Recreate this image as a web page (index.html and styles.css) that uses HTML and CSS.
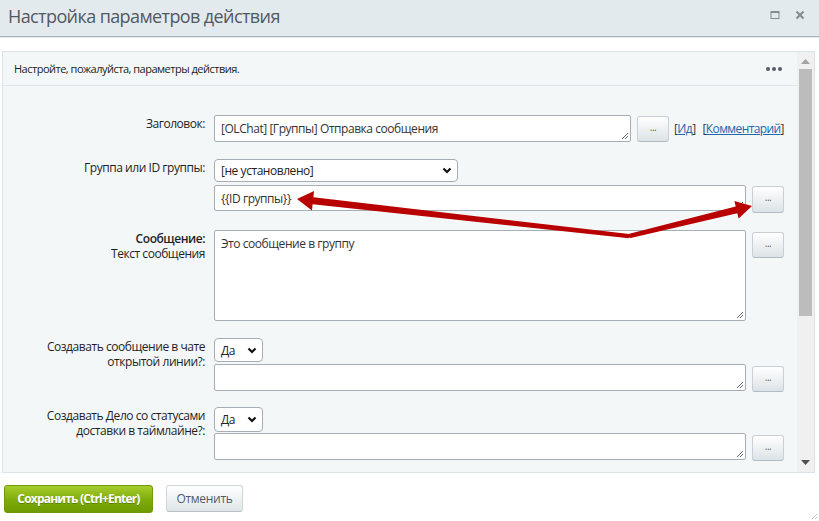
FILE: index.html
```html
<!DOCTYPE html>
<html lang="ru">
<head>
<meta charset="utf-8">
<title>Настройка параметров действия</title>
<link rel="stylesheet" href="styles.css">
</head>
<body>
<div class="titlebar">
  <span class="title">Настройка параметров действия</span>
  <div class="win-icons">
    <svg width="10" height="10" viewBox="0 0 10 10"><rect x="1" y="1.5" width="8" height="7" fill="none" stroke="#7f8a95" stroke-width="1"/><rect x="1" y="1" width="8" height="2" fill="#7f8a95"/></svg>
    <svg width="10" height="10" viewBox="0 0 10 10"><path d="M1.5 1.5 L8.5 8.5 M8.5 1.5 L1.5 8.5" stroke="#7f8a95" stroke-width="2"/></svg>
  </div>
</div>
<div class="content">
  <div class="panel">
    <div class="panel-main">
      <div class="panel-head">
        <span>Настройте, пожалуйста, параметры действия.</span>
        <span class="dots"><i></i><i></i><i></i></span>
      </div>
      <div class="form">
        <div class="row r1">
          <div class="label">Заголовок:</div>
          <div class="field">
            <div class="line">
              <div class="ta ta-title">[OLChat] [Группы] Отправка сообщения<svg class="grip" width="9" height="9" viewBox="0 0 9 9"><path d="M8 2 L2 8 M8 5 L5 8" stroke="#666" stroke-width="1"/></svg></div>
              <div class="btn-dots">...</div>
              <div class="links"><span class="br">[</span><a>Ид</a><span class="br">]</span><span class="br sp">[</span><a>Комментарий</a><span class="br">]</span></div>
            </div>
          </div>
        </div>
        <div class="row r2">
          <div class="label">Группа или ID группы:</div>
          <div class="field">
            <div class="select sel-wide"><span>[не установлено]</span><svg width="10" height="7" viewBox="0 0 10 7"><path d="M1.5 1.5 L5 5 L8.5 1.5" fill="none" stroke="#111" stroke-width="2.2"/></svg></div>
            <div class="line">
              <div class="ta ta-id">{{ID группы}}<svg class="grip" width="9" height="9" viewBox="0 0 9 9"><path d="M8 2 L2 8 M8 5 L5 8" stroke="#666" stroke-width="1"/></svg></div>
              <div class="btn-dots tall">...</div>
            </div>
          </div>
        </div>
        <div class="row r3">
          <div class="label"><span class="strong">Сообщение:</span><br>Текст сообщения</div>
          <div class="field">
            <div class="line">
              <div class="ta ta-big">Это сообщение в группу<svg class="grip" width="9" height="9" viewBox="0 0 9 9"><path d="M8 2 L2 8 M8 5 L5 8" stroke="#666" stroke-width="1"/></svg></div>
              <div class="btn-dots low">...</div>
            </div>
          </div>
        </div>
        <div class="row r4">
          <div class="label">Создавать сообщение в чате<br>открытой линии?:</div>
          <div class="field">
            <div class="select sel-small"><span>Да</span><svg width="10" height="7" viewBox="0 0 10 7"><path d="M1.5 1.5 L5 5 L8.5 1.5" fill="none" stroke="#111" stroke-width="2.2"/></svg></div>
            <div class="line">
              <div class="ta"><svg class="grip" width="9" height="9" viewBox="0 0 9 9"><path d="M8 2 L2 8 M8 5 L5 8" stroke="#666" stroke-width="1"/></svg></div>
              <div class="btn-dots low">...</div>
            </div>
          </div>
        </div>
        <div class="row r5">
          <div class="label">Создавать Дело со статусами<br>доставки в таймлайне?:</div>
          <div class="field">
            <div class="select sel-small s5"><span>Да</span><svg width="10" height="7" viewBox="0 0 10 7"><path d="M1.5 1.5 L5 5 L8.5 1.5" fill="none" stroke="#111" stroke-width="2.2"/></svg></div>
            <div class="line">
              <div class="ta"><svg class="grip" width="9" height="9" viewBox="0 0 9 9"><path d="M8 2 L2 8 M8 5 L5 8" stroke="#666" stroke-width="1"/></svg></div>
              <div class="btn-dots low">...</div>
            </div>
          </div>
        </div>
      </div>
    </div>
    <div class="scrollbar">
      <svg class="sb-arrow" width="9" height="5" viewBox="0 0 9 5"><path d="M0 5 L4.5 0 L9 5 Z" fill="#a3a3a3"/></svg>
      <div class="thumb"></div>
      <div class="sb-fill"></div>
      <svg class="sb-arrow" width="9" height="5" viewBox="0 0 9 5"><path d="M0 0 L4.5 5 L9 0 Z" fill="#505050"/></svg>
    </div>
  </div>
  <div class="footer">
    <div class="btn-save">Сохранить (Ctrl+Enter)</div>
    <div class="btn-cancel">Отменить</div>
  </div>
</div>
<svg class="arrows" width="819" height="521" viewBox="0 0 819 521">
  <polygon fill="#b90000" points="297,199 314,191 313.4,197.3 629.2,234 628.8,238.2 312.6,204.3 312,210.5"/>
  <polygon fill="#b90000" points="752,206 738.6,218.5 737.3,213.2 629.6,238.2 628.4,234 735.7,206.4 734.4,201"/>
</svg>
<svg class="corner-grip" width="8" height="8" viewBox="0 0 8 8"><path d="M7 2 L2 7 M7 5 L5 7" stroke="#c8c8c8" stroke-width="1"/></svg>
</body>
</html>
```
FILE: styles.css
```css
html, body {
  margin: 0;
  padding: 0;
  background: #fff;
  width: 819px;
  height: 521px;
  overflow: hidden;
  font-family: "Open Sans", "Noto Sans", sans-serif;
  color: #222;
  position: relative;
}

.titlebar {
  height: 36px;
  background: #e3eaed;
  border-bottom: 1px solid #adb2b6;
  box-shadow: 0 1px 0 #e6e9eb;
  display: flex;
  align-items: center;
  justify-content: space-between;
  padding: 0 14px 0 8px;
}
.title {
  font-size: 18px;
  color: #525860;
  letter-spacing: -0.6px;
  margin-top: -5px;
}
.win-icons {
  display: flex;
  gap: 15px;
  margin-top: -6px;
}

.content {
  padding: 14px 4px 0 2px;
}

.panel {
  height: 420px;
  width: 811px;
  border: 1px solid #dbe3e7;
  background: #f4f7f8;
  display: flex;
  overflow: hidden;
}
.panel-main {
  width: 794px;
  overflow: hidden;
}
.panel-head {
  height: 33px;
  border-bottom: 1px solid #dde6ea;
  display: flex;
  align-items: center;
  justify-content: space-between;
  padding: 0 15px 0 11px;
  font-size: 11px;
  letter-spacing: -0.5px;
  color: #222;
}
.dots {
  display: flex;
  gap: 2px;
}
.dots i {
  width: 4px;
  height: 4px;
  border-radius: 50%;
  background: #535c69;
}

.form {
  padding-top: 13px;
}
.row {
  display: grid;
  grid-template-columns: 202px 1fr;
  column-gap: 9px;
  margin-top: 17px;
}
.row.r1 {
  margin-top: 16px;
}
.row.r5 {
  margin-top: 15px;
}
.label {
  text-align: right;
  font-size: 12px;
  line-height: 15px;
  padding-top: 1px;
  color: #1f1f1f;
  letter-spacing: -0.45px;
}
.strong {
  font-weight: 600;
}
.field {
  display: flex;
  flex-direction: column;
  gap: 2px;
}
.line {
  display: flex;
  align-items: flex-start;
  gap: 6px;
}
.ta {
  position: relative;
  box-sizing: border-box;
  width: 532px;
  height: 27px;
  border: 1px solid #a5aeb5;
  border-radius: 2px;
  background: #fff;
  font-size: 12px;
  line-height: 15px;
  padding: 5px 6px;
  color: #333;
  letter-spacing: -0.45px;
}
.ta-title {
  width: 417px;
}
.ta-id {
  height: 26px;
}
.ta-big {
  height: 91px;
}
.grip {
  position: absolute;
  right: 1px;
  bottom: 1px;
}
.btn-dots {
  box-sizing: border-box;
  width: 32px;
  height: 26px;
  margin-top: 1px;
  border: 1px solid #c9d0d5;
  border-bottom-color: #b2bbc1;
  border-radius: 3px;
  background: linear-gradient(#ffffff, #dce3e6);
  font-size: 10px;
  line-height: 20px;
  text-align: center;
  color: #555d66;
  letter-spacing: -0.5px;
}
.btn-dots.tall {
  height: 27px;
}
.btn-dots.low {
  margin-top: 2px;
}
.links {
  font-size: 12px;
  line-height: 15px;
  padding-top: 6px;
  margin-left: -1px;
  letter-spacing: -0.6px;
  white-space: nowrap;
}
.links .br {
  color: #333;
}
.links .sp {
  margin-left: 7px;
}
.links a {
  color: #2067b0;
  text-decoration: underline;
}

.select {
  box-sizing: border-box;
  height: 23px;
  border: 1px solid #a5aeb5;
  border-radius: 4px;
  background: #fff;
  display: flex;
  align-items: center;
  justify-content: space-between;
  padding: 0 5px 0 6px;
  font-size: 12px;
  color: #222;
  letter-spacing: -0.45px;
}
.sel-wide {
  width: 244px;
  margin-bottom: 1px;
}
.sel-small {
  width: 49px;
  height: 24px;
}
.sel-small.s5 {
  height: 25px;
  margin-bottom: -1px;
}

.scrollbar {
  width: 17px;
  background: #f0f0f0;
  display: flex;
  flex-direction: column;
  align-items: center;
  padding-top: 7px;
}
.sb-arrow {
  flex: none;
}
.thumb {
  width: 13px;
  height: 247px;
  margin-top: 5px;
  background: #bcbcbc;
}
.sb-fill {
  flex: 1;
}
.scrollbar .sb-arrow:last-child {
  margin-bottom: 7px;
}

.footer {
  display: flex;
  gap: 13px;
  padding: 12px 0 0 2px;
  align-items: flex-start;
}
.btn-save {
  box-sizing: border-box;
  width: 149px;
  height: 28px;
  border-radius: 3px;
  border: 1px solid #6f9a06;
  background: linear-gradient(#a6cd2c, #7eab0c 55%, #6c9a00);
  color: #fff;
  font-size: 12px;
  font-weight: 700;
  line-height: 26px;
  text-align: center;
  letter-spacing: -0.8px;
  text-shadow: 0 1px 0 rgba(0,0,0,0.25);
}
.btn-cancel {
  box-sizing: border-box;
  width: 77px;
  height: 27px;
  border-radius: 3px;
  border: 1px solid #cfd6da;
  border-bottom-color: #b8c0c5;
  background: linear-gradient(#ffffff, #dfe5e8);
  color: #535c69;
  font-size: 12px;
  line-height: 25px;
  text-align: center;
  letter-spacing: -0.3px;
}

.arrows {
  position: absolute;
  left: 0;
  top: 0;
  pointer-events: none;
}
.corner-grip {
  position: absolute;
  right: 1px;
  bottom: 1px;
}
```
